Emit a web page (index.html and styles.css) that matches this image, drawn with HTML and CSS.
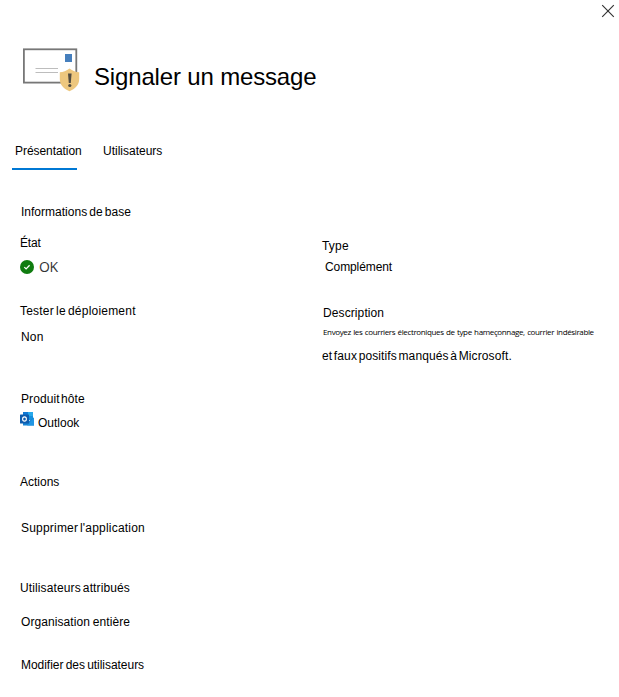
FILE: index.html
```html
<!DOCTYPE html>
<html lang="fr">
<head>
<meta charset="utf-8">
<title>Signaler un message</title>
<link rel="stylesheet" href="styles.css">
</head>
<body>
<main class="panel">
  <div class="toolbar">
    <svg class="close" viewBox="0 0 14 14" role="img" aria-label="Fermer"><path d="M1.2 1.2 12.8 12.8M12.8 1.2 1.2 12.8" fill="none" stroke="#333" stroke-width="1.15"/></svg>
  </div>
  <header class="header">
    <svg class="mail" viewBox="0 0 58 46" aria-hidden="true">
      <rect x="1.9" y="2.3" width="52.4" height="33.3" fill="#fff" stroke="#777" stroke-width="1.8"/>
      <rect x="43" y="7" width="7" height="8" fill="#467fbd"/>
      <path d="M13.5 21.5H36M13.5 25.5H36" stroke="#bdbdbd" stroke-width="1"/>
      <path d="M47.5 21.5C44.5 24 41 25 37.8 25.2V32C37.8 38 42 42 47.5 44.3 53 42 57.2 38 57.2 32V25.2C54 25 50.5 24 47.5 21.5Z" fill="#edc77e"/>
      <path d="M46 26.5H49.6L48.8 36H46.8Z" fill="#514b40"/>
      <circle cx="47.8" cy="38.5" r="1.6" fill="#514b40"/>
    </svg>
    <h1 class="title">Signaler un message</h1>
  </header>
  <nav class="tabs">
    <span class="tab active">Présentation</span>
    <span class="tab users">Utilisateurs</span>
  </nav>
  <h2 class="section basics">Informations de base</h2>
  <div class="columns">
    <div class="left">
      <p class="state-label">État</p>
      <div class="status">
        <svg class="check" viewBox="0 0 14 14" aria-hidden="true"><circle cx="7" cy="7" r="7" fill="#107c10"/><path d="m4.3 7.1 1.8 1.8 3.5-3.6" fill="none" stroke="#fff" stroke-width="1.3"/></svg>
        <span class="ok">OK</span>
      </div>
      <p class="deploy-label">Tester le déploiement</p>
      <p class="deploy-value">Non</p>
      <p class="host-label">Produit hôte</p>
      <div class="host">
        <svg class="outlook" viewBox="0 0 14 14" aria-hidden="true">
          <path d="M3 0H13V8H3Z" fill="#1490df"/><path d="M8 0H13V4H8Z" fill="#28a8ea"/><path d="M3 0H8V4H3Z" fill="#0f78d4"/>
          <path d="M3 6 9 9 14 5.5V13.5H3Z" fill="#1683d2"/><path d="M14 5.5V13.5H7Z" fill="#2196e3"/>
          <rect y="2.5" width="9" height="9" rx=".6" fill="#0f5cad"/><ellipse cx="4.5" cy="7" rx="1.9" ry="2.1" fill="none" stroke="#fff" stroke-width="1.1"/>
        </svg>
        <span class="outlook-name">Outlook</span>
      </div>
    </div>
    <div class="right">
      <p class="type-label">Type</p>
      <p class="type-value">Complément</p>
      <p class="desc-label">Description</p>
      <p class="desc-small">Envoyez les courriers électroniques de type hameçonnage, courrier indésirable</p>
      <p class="desc-main">et faux positifs manqués à Microsoft.</p>
    </div>
  </div>
  <h2 class="section actions">Actions</h2>
  <p class="remove">Supprimer l'application</p>
  <h2 class="section assigned">Utilisateurs attribués</h2>
  <p class="organisation">Organisation entière</p>
  <p class="edit">Modifier des utilisateurs</p>
</main>
</body>
</html>
```
FILE: styles.css
```css
* { box-sizing: border-box; }
body { margin: 0; background: #fff; color: #000; font: 12px/16px "Liberation Sans", Arial, sans-serif; }
h1, h2, p { margin: 0; font-size: 12px; font-weight: 400; white-space: nowrap; }
svg { display: block; flex: none; }
.panel { height: 697px; overflow: hidden; padding-left: 20px; }
.toolbar { display: flex; justify-content: flex-end; height: 47px; padding: 4px 4px 0 0; }
.close { width: 14px; height: 14px; }
.header { display: flex; height: 96px; padding-left: 2px; }
.mail { width: 58px; height: 46px; }
.title { margin: 15px 0 0 14px; font-size: 24px; line-height: 30px; letter-spacing: -.16px; }
.tabs { display: flex; height: 27px; margin-left: -8px; }
.tab { width: 65px; height: 27px; padding-left: 3px; white-space: nowrap; }
.active { border-bottom: 2px solid #0078d4; letter-spacing: -.06px; }
.users { margin-left: 23px; }
.basics { margin: 34px 0 0 1px; word-spacing: -1.2px; letter-spacing: .01px; }
.columns { display: grid; grid-template-columns: 302px 1fr; margin-top: 15px; height: 239px; }
.state-label { letter-spacing: -.2px; }
.status { display: flex; align-items: center; gap: 5px; height: 16px; margin-top: 8px; }
.check { width: 14px; height: 14px; }
.ok { font: 14px/16px "Open Sans", sans-serif; color: #333; letter-spacing: -.3px; }
.deploy-label { margin-top: 28px; word-spacing: -1.4px; letter-spacing: .21px; }
.deploy-value { margin: 10px 0 0 1px; letter-spacing: .2px; }
.host-label { margin: 46px 0 0 1px; word-spacing: -2px; letter-spacing: .08px; }
.host { display: flex; gap: 4px; margin-top: 5px; }
.outlook { width: 14px; height: 14px; }
.outlook-name { margin-top: 3px; }
.type-label { margin-top: 3px; letter-spacing: .2px; }
.type-value { margin: 5px 0 0 3px; letter-spacing: -.1px; }
.desc-label { margin: 30px 0 0 1px; letter-spacing: .1px; }
.desc-small { margin: 3px 0 0 1px; font: 8px/16px "Open Sans", sans-serif; letter-spacing: -.36px; word-spacing: .6px; }
.desc-main { margin-top: 8px; word-spacing: -1.8px; letter-spacing: .11px; }
.remove { margin: 30px 0 0 1px; word-spacing: -1.7px; letter-spacing: .2px; }
.assigned { margin-top: 44px; word-spacing: -1.4px; letter-spacing: .12px; }
.organisation { margin: 18px 0 0 1px; word-spacing: -.6px; letter-spacing: .08px; }
.edit { margin: 27px 0 0 1px; word-spacing: -1px; letter-spacing: -.04px; }
```
